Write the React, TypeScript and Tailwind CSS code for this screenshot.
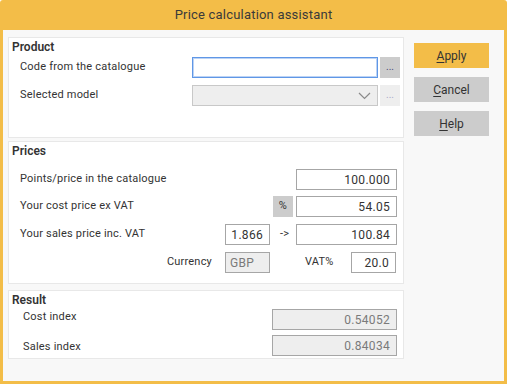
const font = { fontFamily: 'Roboto, "Noto Sans", sans-serif' };

function Box({ w, value, muted }: { w: string; value: string; muted?: boolean }) {
  return (
    <div
      className={`${w} h-[21px] border flex items-center justify-end pr-[6px] text-[12px] tracking-[0.3px] ${
        muted ? "bg-[#eeeeee] border-[#a6a6a6] text-[#7a7a7a]" : "bg-white border-[#a6a6a6] text-[#333]"
      }`}
    >
      {value}
    </div>
  );
}

function Btn({ k, rest, primary }: { k: string; rest: string; primary?: boolean }) {
  return (
    <button
      className={`w-[75px] h-[25px] text-[12px] text-[#333] ${primary ? "bg-[#f3bd48]" : "bg-[#cccccc]"}`}
    >
      <span className="underline underline-offset-2">{k}</span>
      {rest}
    </button>
  );
}

export default function App() {
  return (
    <div style={font} className="w-[507px] h-[384px] bg-[#f3bd48] rounded-t-[3px] flex flex-col px-[3px] pb-[3px] text-[#333]">
      <div className="h-[30px] flex items-center justify-center text-[13px] tracking-[0.2px] text-[#3a3a3a]">
        Price calculation assistant
      </div>

      <div className="flex-1 bg-[#f8f8f8] flex pl-[5px] pt-[7px]">
        <div className="w-[396px] flex flex-col">
          {/* Product */}
          <div className="h-[101px] bg-white border border-[#e8e8e8] pl-[3px] text-[11px]">
            <div className="font-semibold text-[12px] leading-[16px] mt-[1px]">Product</div>
            <div className="flex items-center mt-[2px] h-[21px]">
              <div className="w-[180px] pl-[8px] tracking-[0.2px]">Code from the catalogue</div>
              <div className="w-[186px] h-[21px] bg-white border border-[#5f97e6] shadow-[inset_0_0_0_1px_#bcd3f5]" />
              <div className="ml-[2px] w-[20px] h-[21px] bg-[#cccccc] flex items-center justify-center text-[10px] text-[#4a4a7a] pb-[3px]">
                ...
              </div>
            </div>
            <div className="flex items-center mt-[7px] h-[21px]">
              <div className="w-[180px] pl-[8px] tracking-[0.2px]">Selected model</div>
              <div className="w-[186px] h-[21px] bg-[#eeeeee] border border-[#c8c8c8] flex items-center justify-end pr-[6px]">
                <svg width="13" height="8" viewBox="0 0 13 8">
                  <path d="M1 1l5.5 5.5L12 1" fill="none" stroke="#8a8a8a" strokeWidth="1.2" />
                </svg>
              </div>
              <div className="ml-[2px] w-[20px] h-[21px] bg-[#eeeeee] flex items-center justify-center text-[10px] text-[#a9a9c9] pb-[3px]">
                ...
              </div>
            </div>
          </div>

          {/* Prices */}
          <div className="h-[143px] mt-[3px] bg-white border border-[#e8e8e8] pl-[3px] text-[11px] tracking-[0.2px]">
            <div className="font-semibold text-[12px] tracking-normal leading-[16px] mt-[1px]">Prices</div>
            <div className="flex items-center mt-[10px] h-[21px]">
              <div className="w-[284px] pl-[8px]">Points/price in the catalogue</div>
              <Box w="w-[101px]" value="100.000" />
            </div>
            <div className="flex items-center mt-[6px] h-[21px]">
              <div className="w-[261px] pl-[8px]">Your cost price ex VAT</div>
              <div className="w-[20px] h-[21px] bg-[#cccccc] flex items-center justify-center text-[11px]">%</div>
              <div className="w-[3px]" />
              <Box w="w-[101px]" value="54.05" />
            </div>
            <div className="flex items-center mt-[7px] h-[21px]">
              <div className="w-[213px] pl-[8px]">Your sales price inc. VAT</div>
              <Box w="w-[45px]" value="1.866" />
              <div className="w-[26px] pl-[10px]">-&gt;</div>
              <Box w="w-[101px]" value="100.84" />
            </div>
            <div className="flex items-center mt-[7px] h-[21px]">
              <div className="w-[213px] text-right pr-[13px]">Currency</div>
              <div className="w-[45px] h-[21px] bg-[#eeeeee] border border-[#a6a6a6] text-[#7a7a7a] text-[12px] flex items-center pl-[4px] tracking-[0.3px]">
                GBP
              </div>
              <div className="w-[81px] pl-[35px]">VAT%</div>
              <Box w="w-[45px]" value="20.0" />
            </div>
          </div>

          {/* Result */}
          <div className="h-[69px] mt-[6px] bg-white border border-[#e8e8e8] pl-[3px] text-[11px] tracking-[0.2px]">
            <div className="font-semibold text-[12px] tracking-normal leading-[16px] mt-[1px]">Result</div>
            <div className="flex items-start mt-[1px] h-[21px]">
              <div className="w-[260px] pl-[11px] leading-[16px]">Cost index</div>
              <Box w="w-[125px]" value="0.54052" muted />
            </div>
            <div className="flex items-center mt-[5px] h-[21px]">
              <div className="w-[260px] pl-[11px] pt-[3px]">Sales index</div>
              <Box w="w-[125px]" value="0.84034" muted />
            </div>
          </div>
        </div>

        <div className="ml-[10px] mt-[6px] flex flex-col gap-[9px]">
          <Btn k="A" rest="pply" primary />
          <Btn k="C" rest="ancel" />
          <Btn k="H" rest="elp" />
        </div>
      </div>
    </div>
  );
}
